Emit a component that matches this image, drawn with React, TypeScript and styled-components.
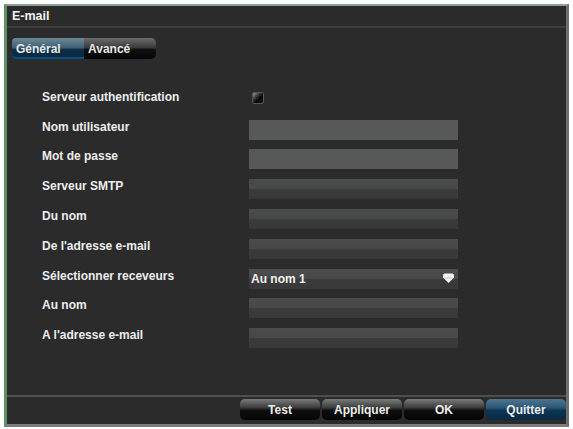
import styled, { createGlobalStyle } from 'styled-components'

const GlobalStyle = createGlobalStyle`
  html, body {
    margin: 0;
    background: #ffffff;
  }
  body {
    font-family: 'Liberation Sans', Arial, sans-serif;
  }
`

const Window = styled.div`
  box-sizing: border-box;
  margin: 4px 0 0 4px;
  width: 565px;
  height: 423px;
  background: #2b2b2b;
  border-left: 3px solid #5f8f62;
  border-top: 2px solid #8aa392;
  border-right: 3px solid #6d6f6e;
  border-bottom: 3px solid #7c7d7c;
  display: flex;
  flex-direction: column;
  color: #f2f2f2;
`

const TitleBar = styled.div`
  height: 20px;
  padding-left: 5px;
  display: flex;
  align-items: center;
  font-size: 12.5px;
  font-weight: bold;
  border-bottom: 2px solid #3c3d3c;
`

const TabBar = styled.div`
  display: flex;
  margin: 10px 0 0 5px;
`

const Tab = styled.div<{ $active?: boolean }>`
  width: 72px;
  height: 21px;
  box-sizing: border-box;
  padding-left: 4px;
  display: flex;
  align-items: center;
  font-size: 12px;
  font-weight: bold;
  color: #e8e8e8;
  border-radius: ${(p) => (p.$active ? '4px 0 0 4px' : '0 5px 5px 0')};
  background: ${(p) =>
    p.$active
      ? 'linear-gradient(#6f8796 0%, #3f6178 45%, #0c2f49 55%, #0a2740 100%)'
      : 'linear-gradient(#6b6d6d 0%, #3a3b3b 45%, #101010 55%, #050505 100%)'};
  box-shadow: ${(p) => (p.$active ? 'inset 0 -2px 0 #0a4f7a' : 'none')};
`

const Form = styled.div`
  display: grid;
  grid-template-columns: 207px 209px;
  grid-auto-rows: 29.8px;
  align-items: center;
  margin: 25px 0 0 35px;
`

const Label = styled.div`
  font-size: 12px;
  font-weight: bold;
  color: #ededed;
  padding-bottom: 4px;
`

const Field = styled.div<{ $enabled?: boolean }>`
  height: 20px;
  margin-top: 2px;
  background: ${(p) =>
    p.$enabled
      ? '#565957'
      : 'linear-gradient(#4a4c4b 0%, #474948 48%, #3a3b3a 52%, #373837 100%)'};
`

const Select = styled.div`
  height: 20px;
  margin-top: 2px;
  display: flex;
  align-items: center;
  justify-content: space-between;
  padding: 0 3px 0 2px;
  font-size: 12px;
  font-weight: bold;
  color: #f0f0f0;
  background: linear-gradient(#4b4d4c 0%, #474948 48%, #3a3b3a 52%, #373837 100%);
`

const CheckBox = styled.div`
  width: 10px;
  height: 10px;
  margin: 0 0 2px 3px;
  border: 1px solid #555;
  border-radius: 2px;
  background: linear-gradient(135deg, #9a9a9a 0%, #3a3a3a 35%, #050505 60%, #1a1a1a 100%);
`

const Footer = styled.div`
  margin-top: auto;
  border-top: 2px solid #4e4f4e;
  display: flex;
  justify-content: flex-end;
  gap: 2px;
  padding: 2px 0 4px;
`

const Button = styled.div<{ $primary?: boolean }>`
  width: 80px;
  height: 21px;
  display: flex;
  align-items: center;
  justify-content: center;
  font-size: 12px;
  font-weight: bold;
  color: #ececec;
  border-radius: 5px;
  background: ${(p) =>
    p.$primary
      ? 'linear-gradient(#4f7690 0%, #2c5877 40%, #0b3453 55%, #082a45 100%)'
      : 'linear-gradient(#7a7c7c 0%, #3c3d3d 40%, #0d0d0d 55%, #050505 100%)'};
`

const rows: { label: string; kind: 'check' | 'on' | 'off' | 'select' }[] = [
  { label: 'Serveur authentification', kind: 'check' },
  { label: 'Nom utilisateur', kind: 'on' },
  { label: 'Mot de passe', kind: 'on' },
  { label: 'Serveur SMTP', kind: 'off' },
  { label: 'Du nom', kind: 'off' },
  { label: "De l'adresse e-mail", kind: 'off' },
  { label: 'Sélectionner receveurs', kind: 'select' },
  { label: 'Au nom', kind: 'off' },
  { label: "A l'adresse e-mail", kind: 'off' },
]

const DropArrow = () => (
  <svg width="13" height="11" viewBox="0 0 13 11">
    <path d="M1 2.5 Q1 0.5 3 0.5 H10 Q12 0.5 12 2.5 V4.5 L6.5 10 L1 4.5 Z" fill="#f4f4f4" />
    <path d="M2 5 H11" stroke="#bdbdbd" strokeWidth="0.8" />
  </svg>
)

export default function App() {
  return (
    <>
      <GlobalStyle />
      <Window>
        <TitleBar>E-mail</TitleBar>
        <TabBar>
          <Tab $active>Général</Tab>
          <Tab>Avancé</Tab>
        </TabBar>
        <Form>
          {rows.map((r) => (
            <>
              <Label key={r.label}>{r.label}</Label>
              {r.kind === 'check' && <CheckBox />}
              {r.kind === 'on' && <Field $enabled />}
              {r.kind === 'off' && <Field />}
              {r.kind === 'select' && (
                <Select>
                  Au nom 1
                  <DropArrow />
                </Select>
              )}
            </>
          ))}
        </Form>
        <Footer>
          <Button>Test</Button>
          <Button>Appliquer</Button>
          <Button>OK</Button>
          <Button $primary>Quitter</Button>
        </Footer>
      </Window>
    </>
  )
}
